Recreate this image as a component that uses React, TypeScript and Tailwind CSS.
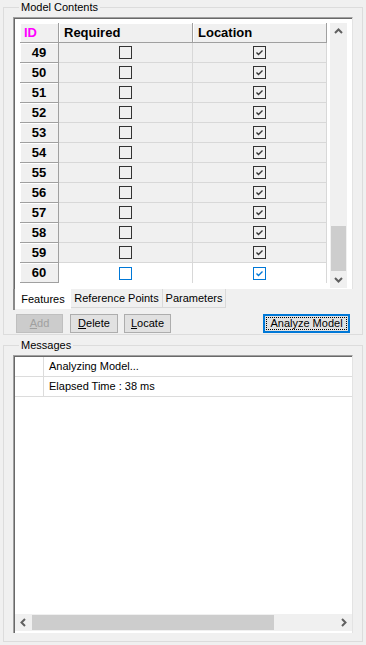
import React from "react";

const ids = [49, 50, 51, 52, 53, 54, 55, 56, 57, 58, 59, 60];

function CheckBox({ checked, active }: { checked: boolean; active: boolean }) {
    const color = active ? "#0078d7" : "#333333";
    return (
        <svg width="13" height="13" viewBox="0 0 13 13">
            <rect x="0.5" y="0.5" width="12" height="12" fill="none" stroke={color} />
            {checked && (
                <polyline points="3.5,6.5 5.5,8.5 9.5,4.5" fill="none" stroke={color} strokeWidth="1.4" />
            )}
        </svg>
    );
}

function Chevron({ dir }: { dir: "up" | "down" | "left" | "right" }) {
    const pts = {
        up: "1,5 4.5,1.5 8,5",
        down: "1,2 4.5,5.5 8,2",
        left: "5,1 1.5,4.5 5,8",
        right: "2,1 5.5,4.5 2,8",
    }[dir];
    const size = dir === "up" || dir === "down" ? { w: 9, h: 7 } : { w: 7, h: 9 };
    return (
        <svg width={size.w} height={size.h} viewBox={`0 0 ${size.w} ${size.h}`}>
            <polyline points={pts} fill="none" stroke="#606060" strokeWidth="2" />
        </svg>
    );
}

function Btn({ children, w, disabled }: { children: React.ReactNode; w: string; disabled?: boolean }) {
    return (
        <div
            className={
                disabled
                    ? `${w} h-[19px] flex items-center justify-center bg-[#cccccc] border border-[#bfbfbf] text-[#a0a0a0]`
                    : `${w} h-[19px] flex items-center justify-center bg-[#e1e1e1] border border-[#adadad] text-black`
            }
        >
            {children}
        </div>
    );
}

export default function App() {
    return (
        <div className="w-[366px] h-[645px] bg-[#f0f0f0] px-[3px] font-['Liberation_Sans',Arial,sans-serif] text-[11px] text-black overflow-hidden">
            {/* Model Contents group */}
            <fieldset className="h-[335px] border border-[#dcdcdc] px-[9px] pt-[3px]">
                <legend className="ml-[6px] px-[2px] leading-[14px] text-[11px]">Model Contents</legend>

                <div className="flex flex-col w-[340px]">
                    <div className="h-[272px] border-t border-l border-[#a0a0a0] border-r border-r-[#e3e3e3]">
                        <div className="h-full border-t border-l border-[#696969] bg-white flex pl-[5px] pt-[4px]">
                            <div className="flex flex-col">
                                <div className="flex h-[20px] font-bold text-[13px]">
                                    <div className="w-[39px] flex items-center pl-[4px] text-[#ff00ff] bg-[#f0f0f0] border-r border-b border-[#a0a0a0] shadow-[inset_1px_1px_0_#ffffff]">ID</div>
                                    <div className="w-[134px] flex items-center pl-[5px] bg-[#f0f0f0] border-r border-b border-[#a0a0a0] shadow-[inset_1px_1px_0_#ffffff]">Required</div>
                                    <div className="w-[134px] flex items-center pl-[5px] bg-[#f0f0f0] border-r border-b border-[#a0a0a0] shadow-[inset_1px_1px_0_#ffffff]">Location</div>
                                </div>
                                {ids.map((id) => {
                                    const last = id === 60;
                                    return (
                                        <div key={id} className="flex h-[20px]">
                                            <div className="w-[39px] flex items-center justify-center font-bold text-[13px] bg-[#f0f0f0] border-r border-b border-[#a0a0a0] shadow-[inset_1px_1px_0_#ffffff]">
                                                {id}
                                            </div>
                                            <div className={last ? "w-[134px] flex items-center justify-center bg-white border-r border-[#d8d8d8]" : "w-[134px] flex items-center justify-center bg-[#f0f0f0] border-r border-b border-[#d8d8d8]"}>
                                                <CheckBox checked={false} active={last} />
                                            </div>
                                            <div className={last ? "w-[134px] flex items-center justify-center bg-white border-r border-[#d8d8d8]" : "w-[134px] flex items-center justify-center bg-[#f0f0f0] border-r border-b border-[#d8d8d8]"}>
                                                <CheckBox checked={true} active={last} />
                                            </div>
                                        </div>
                                    );
                                })}
                            </div>
                            {/* vertical scrollbar */}
                            <div className="ml-[3px] w-[17px] h-[265px] bg-[#f0f0f0] flex flex-col">
                                <div className="h-[17px] flex items-center justify-center"><Chevron dir="up" /></div>
                                <div className="flex-1 flex flex-col justify-end">
                                    <div className="h-[45px] bg-[#cdcdcd] mx-[1px]" />
                                </div>
                                <div className="h-[17px] flex items-center justify-center"><Chevron dir="down" /></div>
                            </div>
                        </div>
                    </div>
                    {/* tabs */}
                    <div className="h-[21px] flex border-l-2 border-[#8a8a8a]">
                        <div className="w-[56px] h-[20px] bg-white flex items-center justify-center">Features</div>
                        <div className="w-[92px] h-[19px] flex items-center justify-center border-r border-b border-[#d9d9d9]">Reference Points</div>
                        <div className="w-[63px] h-[19px] flex items-center justify-center border-r border-b border-[#d9d9d9]">Parameters</div>
                    </div>
                </div>

                <div className="flex mt-[4px] pl-[3px] pr-[3px]">
                    <Btn w="w-[47px]" disabled><span className="underline">A</span>dd</Btn>
                    <div className="ml-[7px]"><Btn w="w-[48px]"><span className="underline">D</span>elete</Btn></div>
                    <div className="ml-[6px]"><Btn w="w-[47px]"><span className="underline">L</span>ocate</Btn></div>
                    <div className="ml-auto w-[87px] h-[19px] border-2 border-[#0078d7] bg-[#e1e1e1] p-[1px]">
                        <div className="h-full border border-dotted border-black flex items-center justify-center">Analyze Model</div>
                    </div>
                </div>
            </fieldset>

            {/* Messages group */}
            <fieldset className="mt-[3px] h-[304px] border border-[#dcdcdc] px-[9px] pt-[3px]">
                <legend className="ml-[6px] px-[2px] leading-[14px] text-[11px]">Messages</legend>

                <div className="w-[340px] h-[278px] border-t border-l border-[#a0a0a0] border-r border-r-[#e3e3e3]">
                    <div className="h-full border-t border-l border-[#696969] bg-white flex flex-col pb-[2px]">
                        {["Analyzing Model...", "Elapsed Time : 38 ms"].map((msg) => (
                            <div key={msg} className="flex h-[20px] border-b border-[#dcdcdc]">
                                <div className="w-[29px] border-r border-[#dcdcdc]" />
                                <div className="flex items-center pl-[5px]">{msg}</div>
                            </div>
                        ))}
                        <div className="flex-1" />
                        {/* horizontal scrollbar */}
                        <div className="h-[17px] flex bg-[#f0f0f0]">
                            <div className="w-[17px] flex items-center justify-center"><Chevron dir="left" /></div>
                            <div className="w-[242px] bg-[#cdcdcd] my-[1px]" />
                            <div className="flex-1" />
                            <div className="w-[17px] flex items-center justify-center"><Chevron dir="right" /></div>
                        </div>
                    </div>
                </div>
            </fieldset>
        </div>
    );
}
